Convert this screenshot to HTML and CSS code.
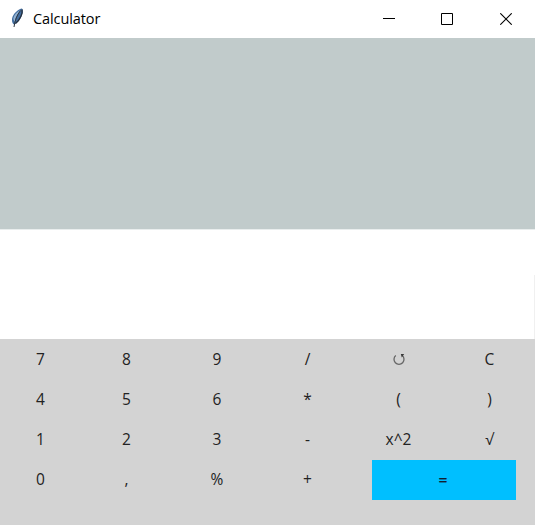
FILE: index.html
```html
<!DOCTYPE html>
<html lang="en">
<head>
<meta charset="utf-8">
<title>Calculator</title>
<link rel="stylesheet" href="styles.css">
</head>
<body>
<div class="window">
  <header class="titlebar">
    <svg class="feather" width="14" height="22" viewBox="0 0 14 22">
      <path d="M11.500 1.500C8 2.500 3.300 6.500 2.200 11C1.500 14 2.500 17 4.200 17.500C8 16 11.800 11 12.800 5C13 3 12.500 1.500 11.500 1.500Z" fill="#426d9f"/>
      <path d="M11 3C8 5.500 5.500 10 4.500 15L3.300 12C4 8 7 4.500 11 3Z" fill="#92b2d2"/>
      <path d="M12 2.500C13 6 10 13 5.500 16.500" fill="none" stroke="#252f3c" stroke-width="1.300"/>
      <path d="M10.500 3.500C7 8 5 13 4 20" fill="none" stroke="#303740" stroke-width="1"/>
    </svg>
    <span class="title">Calculator</span>
    <div class="controls">
      <svg width="12" height="12" viewBox="0 0 12 12"><path d="M0 5.500H12" stroke="#000"/></svg>
      <svg width="12" height="12" viewBox="0 0 12 12"><path d="M.5.5H11.500V11.500H.5Z" fill="none" stroke="#000"/></svg>
      <svg class="close" width="12" height="12" viewBox="0 0 12 12"><path d="M.3.3L11.700 11.700M11.700.3L.3 11.700" stroke="#000" stroke-width="1.100"/></svg>
    </div>
  </header>
  <div class="display"></div>
  <div class="entry"></div>
  <main class="keys">
    <span class="key">7</span><span class="key">8</span><span class="key">9</span><span class="key">/</span>
    <span class="key"><svg width="12" height="13" viewBox="0 0 12 13"><path d="M2.800 2.500A5 5 0 1 0 9.200 2.500" fill="none" stroke="#666" stroke-width="1.300"/><path d="M7.800 1H11.200L8.800 4.500Z" fill="#3a3a3a"/></svg></span>
    <span class="key">C</span>
    <span class="key">4</span><span class="key">5</span><span class="key">6</span><span class="key">*</span><span class="key">(</span><span class="key">)</span>
    <span class="key">1</span><span class="key">2</span><span class="key">3</span><span class="key">-</span><span class="key">x^2</span><span class="key">√</span>
    <span class="key">0</span><span class="key">,</span><span class="key">%</span><span class="key">+</span><span class="key equals">=</span>
  </main>
</div>
</body>
</html>
```

FILE: styles.css
```css
body {
  margin: 0;
  background: #fff;
  font-family: "Open Sans", "Noto Sans", sans-serif;
  color: #222;
}
.window {
  display: flex;
  flex-direction: column;
  height: 525px;
  overflow: hidden;
}
.titlebar {
  display: flex;
  align-items: center;
  height: 38px;
  padding: 0 23px 0 10px;
  box-sizing: border-box;
}
.feather {
  margin-bottom: 3px;
}
.title {
  margin-left: 9px;
  font-size: 14.5px;
  line-height: 38px;
  letter-spacing: -0.1px;
  color: #000;
}
.controls {
  display: flex;
  gap: 46px;
  margin-left: auto;
}
.controls svg {
  display: block;
}
.controls .close {
  margin-left: 1px;
}
.display {
  height: 191px;
  background: #c1cbcb;
  border-bottom: 1px solid #e9eded;
}
.entry {
  height: 109px;
}
.entry::after {
  content: "";
  display: block;
  width: 1px;
  height: 64px;
  margin: 45px 0 0 auto;
  background: #f0f0f0;
}
.keys {
  flex: 1;
  display: grid;
  grid-template-columns: 81px 91px 90px 91px 91px 91px;
  grid-template-rows: repeat(4, 40px);
  padding-top: 1px;
  box-sizing: border-box;
  background: #d3d3d3;
}
.key {
  display: flex;
  align-items: center;
  justify-content: center;
  box-sizing: border-box;
  padding-bottom: 2px;
  font-size: 15.5px;
  line-height: 38px;
}
.equals {
  grid-column: span 2;
  margin: 0 19px;
  padding: 0 2px 0 0;
  background: #00bfff;
  color: #102030;
  -webkit-text-stroke: 0.3px #102030;
}
```
